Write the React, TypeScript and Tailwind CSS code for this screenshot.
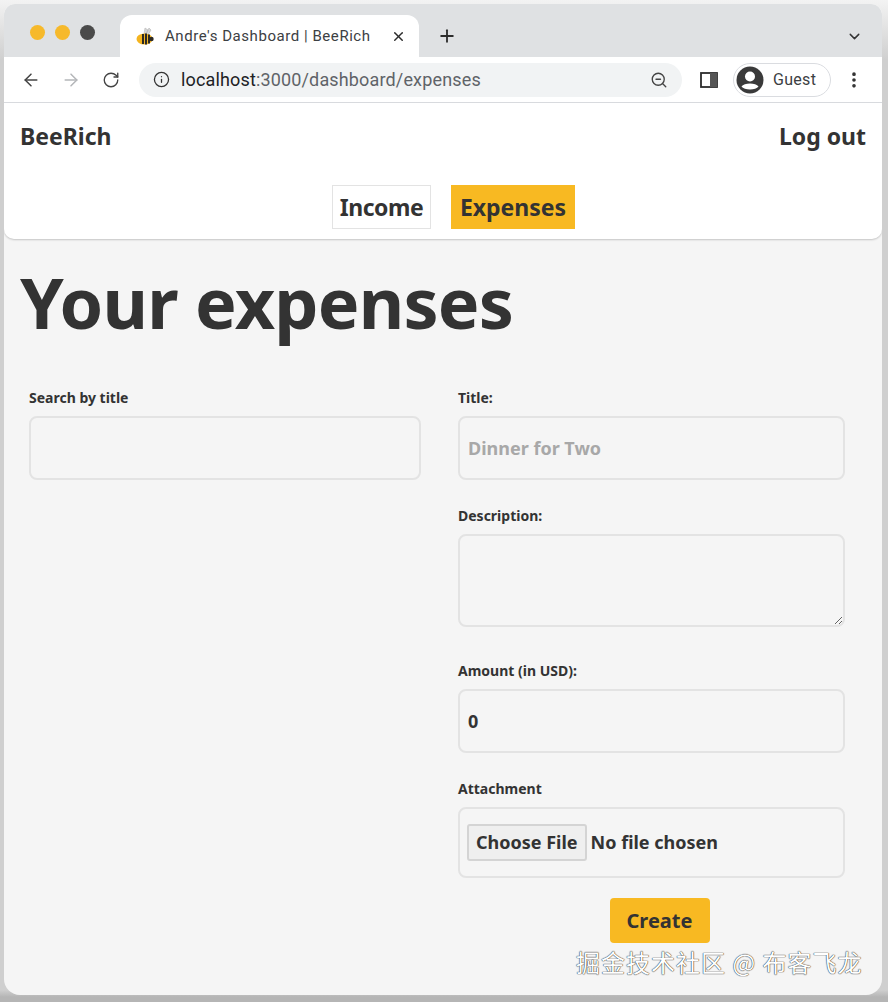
import { ArrowLeft, ArrowRight, ChevronDown, EllipsisVertical, Info, Plus, RotateCw, X, ZoomOut } from 'lucide-react';

function BeeIcon() {
  return (
    <svg width="20" height="20" viewBox="0 0 20 20">
      <path d="M9 8 L10 2 L13 4 L11 8 M11 8 L14 2 L16 4 L13 9" fill="#d6d6d6" stroke="#b5b5b5" strokeWidth="0.6" />
      <ellipse cx="9.5" cy="13" rx="8" ry="5.5" fill="#f4b41f" />
      <path d="M8 8 L8 18 M11 7.5 L11 18.5 M14 8.5 L14 17.5" stroke="#2d2a24" strokeWidth="2" />
      <circle cx="16.5" cy="13" r="2.2" fill="#2d2a24" />
    </svg>
  );
}

function SidePanelIcon() {
  return (
    <svg width="18" height="16" viewBox="0 0 18 16">
      <rect x="1" y="1" width="16" height="14" fill="none" stroke="#2c2c2c" strokeWidth="1.8" />
      <rect x="10" y="1" width="7" height="14" fill="#555" />
    </svg>
  );
}

function GuestAvatar() {
  return (
    <svg width="28" height="28" viewBox="0 0 28 28">
      <circle cx="14" cy="14" r="13.5" fill="#3a3a3a" />
      <circle cx="14" cy="10.5" r="5" fill="#fff" />
      <path d="M5.5 20.5 C8 16.5 20 16.5 22.5 20.5 C20 24.5 8 24.5 5.5 20.5 Z" fill="#fff" />
    </svg>
  );
}

function BrowserChrome() {
  return (
    <div className="font-['Roboto',sans-serif]">
      {/* tab strip */}
      <div className="h-[53px] bg-[#dfe1e3] rounded-t-[11px] flex items-end">
        <div className="flex items-center gap-[10px] w-[116px] h-full pl-[26px] pt-[3px]">
          <span className="w-[15px] h-[15px] shrink-0 rounded-full bg-[#f6b92b]" />
          <span className="w-[15px] h-[15px] shrink-0 rounded-full bg-[#f6b92b]" />
          <span className="w-[15px] h-[15px] shrink-0 rounded-full bg-[#4a4a4a]" />
        </div>
        <div className="w-[299px] h-[42px] bg-white rounded-t-[12px] flex items-center pl-[15px] pr-[13px]">
          <BeeIcon />
          <span className="ml-[10px] text-[15px] tracking-[0.55px] text-[#3c4043] whitespace-nowrap">Andre's Dashboard | BeeRich</span>
          <X className="ml-auto text-[#2c2c2c]" size={15} strokeWidth={2.4} />
        </div>
        <div className="h-[42px] flex items-center ml-[18px]">
          <Plus className="text-[#2c2c2c]" size={20} strokeWidth={2.2} />
        </div>
        <div className="h-[42px] flex items-center ml-auto mr-[19px]">
          <ChevronDown className="text-[#333]" size={17} strokeWidth={2} />
        </div>
      </div>
      {/* toolbar */}
      <div className="h-[46px] bg-white border-b border-[#dadce0] flex items-center pl-[17px]">
        <ArrowLeft className="text-[#444]" size={20} strokeWidth={1.8} />
        <ArrowRight className="ml-[20px] text-[#b4b6b9]" size={20} strokeWidth={1.8} />
        <RotateCw className="ml-[21px] text-[#444]" size={18} strokeWidth={1.8} />
        <div className="ml-[19px] w-[543px] h-[34px] rounded-full bg-[#f1f3f4] flex items-center pl-[14px] pr-[14px]">
          <Info className="text-[#333]" size={17} strokeWidth={1.8} />
          <span className="ml-[11px] text-[18px] tracking-[0.15px] text-[#5f6368] whitespace-nowrap">
            <span className="text-[#202124]">localhost</span>:3000/dashboard/expenses
          </span>
          <ZoomOut className="ml-auto text-[#444]" size={18} strokeWidth={1.8} />
        </div>
        <div className="ml-[18px]">
          <SidePanelIcon />
        </div>
        <div className="ml-[15px] w-[98px] h-[34px] rounded-full border border-[#dadce0] flex items-center pl-[2px]">
          <GuestAvatar />
          <span className="ml-[9px] text-[16px] tracking-[0.3px] text-[#3c4043]">Guest</span>
        </div>
        <EllipsisVertical className="ml-[13px] text-[#333]" size={20} strokeWidth={2.4} />
      </div>
    </div>
  );
}

function Label({ children }: { children: string }) {
  return <label className="block text-[14px] leading-[18px] font-bold text-[#333] mb-[9px]">{children}</label>;
}

const inputClass =
  "block w-full h-[64px] px-[8px] rounded-[8px] border-2 border-[#e3e3e3] bg-[#f5f5f5] text-[18px] font-bold text-[#333] placeholder:text-[#a8a8a8] outline-none";

export default function App() {
  return (
    <div className="relative w-[888px] h-[1002px] overflow-hidden bg-[linear-gradient(#f3f3f3_0,#cfcfcf_60px,#cfcfcf_990px,#b5b5b5_997px)] pt-[4px] pl-[4px] font-['Noto_Sans',sans-serif] text-[#333]">
      <div className="w-[878px] h-[991px] rounded-[11px] rounded-b-[16px] bg-[#f5f5f5] overflow-hidden">
        <BrowserChrome />

        {/* site header */}
        <header className="h-[136px] bg-white rounded-b-[10px] shadow-[0_1px_2px_rgba(0,0,0,0.2)] px-[16px] pt-[17px]">
          <div className="flex justify-between items-center h-[32px] text-[23px] font-bold">
            <a>BeeRich</a>
            <a>Log out</a>
          </div>
          <nav className="flex justify-center gap-[20px] mt-[33px] ml-[21px] text-[23px] font-bold">
            <a className="w-[99px] h-[44px] flex items-center justify-center border border-[#e3e3e3] tracking-[-0.5px] whitespace-nowrap">Income</a>
            <a className="w-[124px] h-[44px] flex items-center justify-center bg-[#f8b922] whitespace-nowrap">Expenses</a>
          </nav>
        </header>

        <main className="pl-[16px]">
          <h1 className="text-[70px] leading-[80px] font-bold tracking-[-0.8px] mt-[23px]">Your expenses</h1>

          <div className="flex mt-[47px] pl-[9px]">
            <section className="w-[392px] shrink-0">
              <Label>Search by title</Label>
              <input className={inputClass} />
            </section>

            <form className="ml-[37px] w-[387px] shrink-0">
              <Label>Title:</Label>
              <input className={inputClass} placeholder="Dinner for Two" />

              <div className="mt-[27px]">
                <Label>Description:</Label>
                <textarea className="block w-full h-[93px] px-[9px] py-[6px] rounded-[8px] border-2 border-[#e3e3e3] bg-[#f5f5f5] outline-none" />
              </div>

              <div className="mt-[35px]">
                <Label>Amount (in USD):</Label>
                <input className={inputClass} defaultValue="0" />
              </div>

              <div className="mt-[27px]">
                <Label>Attachment</Label>
                <input
                  type="file"
                  className="block w-full h-[71px] px-[7px] py-[15px] rounded-[8px] border-2 border-[#e3e3e3] bg-[#f5f5f5] text-[18px] font-bold text-[#333] file:h-[37px] file:px-[7px] file:mr-[4px] file:border-2 file:border-[#d4d4d4] file:rounded-[3px] file:bg-[#efefef] file:font-bold file:text-[#333]"
                />
              </div>

              <div className="flex justify-center mt-[20px] pl-[16px]">
                <button type="button" className="w-[100px] h-[45px] rounded-[4px] bg-[#f8b922] text-[20px] font-bold text-[#333]">
                  Create
                </button>
              </div>
            </form>
          </div>
        </main>
      </div>

      {/* watermark */}
      <div className="absolute left-[576px] top-[946px] text-[24px] leading-[32px] tracking-[1px] whitespace-nowrap text-white font-['Noto_Sans_CJK_SC',sans-serif] [text-shadow:0_0_1px_#222,0_0_1px_#222]">
        掘金技术社区 @ 布客飞龙
      </div>
    </div>
  );
}
